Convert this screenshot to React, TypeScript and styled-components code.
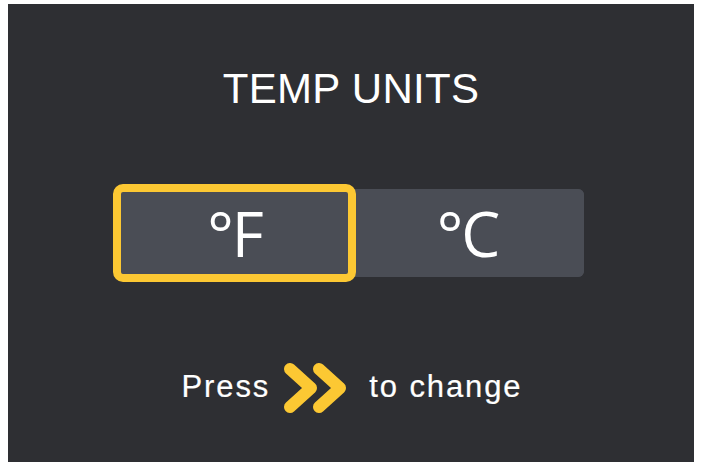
import React from "react";
import styled, { createGlobalStyle } from "styled-components";

const Global = createGlobalStyle`
  html, body { margin: 0; padding: 0; background: #ffffff; }
  body { font-family: "Liberation Sans", Arial, sans-serif; }
`;

const Panel = styled.div`
  box-sizing: border-box;
  margin: 4px 0 0 8px;
  width: 686px;
  height: 458px;
  background: #2e2f33;
  display: flex;
  flex-direction: column;
  align-items: center;
  padding-top: 64px;
`;

const Title = styled.div`
  font-family: "Liberation Sans", Arial, sans-serif;
  font-size: 42px;
  line-height: 42px;
  letter-spacing: 0.3px;
  color: #ffffff;
  white-space: nowrap;
`;

const Track = styled.div`
  margin-top: 79px;
  width: 466px;
  height: 88px;
  border-radius: 6px;
  background: #4a4d55;
  display: flex;
`;

const Option = styled.div<{ $selected?: boolean }>`
  box-sizing: border-box;
  flex: none;
  width: ${(p) => (p.$selected ? "243px" : "233px")};
  height: ${(p) => (p.$selected ? "98px" : "88px")};
  margin: ${(p) => (p.$selected ? "-5px" : "0")};
  border: ${(p) => (p.$selected ? "8px solid #fcc833" : "none")};
  border-radius: ${(p) => (p.$selected ? "10px" : "6px")};
  background: #4a4d55;
  display: flex;
  align-items: center;
  justify-content: center;
  font-family: "Open Sans", "Noto Sans", sans-serif;
  font-size: 62px;
  line-height: 1;
  letter-spacing: -2px;
  color: #ffffff;
  position: relative;
  z-index: ${(p) => (p.$selected ? 1 : 0)};
`;

const Hint = styled.div`
  margin-top: 83px;
  display: flex;
  align-items: center;
  padding-left: 2px;
`;

const HintText = styled.span`
  font-family: "Liberation Sans", Arial, sans-serif;
  font-size: 31px;
  line-height: 31px;
  letter-spacing: 1.9px;
  color: #ffffff;
  white-space: nowrap;
  -webkit-text-stroke: 0.2px #ffffff;
`;

const Chevrons = styled.svg`
  flex: none;
  margin: 3px 22px 0 13px;
`;

export default function App() {
  return (
    <>
      <Global />
      <Panel>
        <Title>TEMP UNITS</Title>
        <Track>
          <Option $selected>°F</Option>
          <Option>°C</Option>
        </Track>
        <Hint>
          <HintText>Press</HintText>
          <Chevrons width="64" height="50" viewBox="0 0 64 50">
            <g
              fill="none"
              stroke="#fcc833"
              strokeWidth="12"
              strokeLinecap="round"
              strokeLinejoin="round"
            >
              <polyline points="7,6 28,25 7,44" />
              <polyline points="36,6 57,25 36,44" />
            </g>
          </Chevrons>
          <HintText>to change</HintText>
        </Hint>
      </Panel>
    </>
  );
}
